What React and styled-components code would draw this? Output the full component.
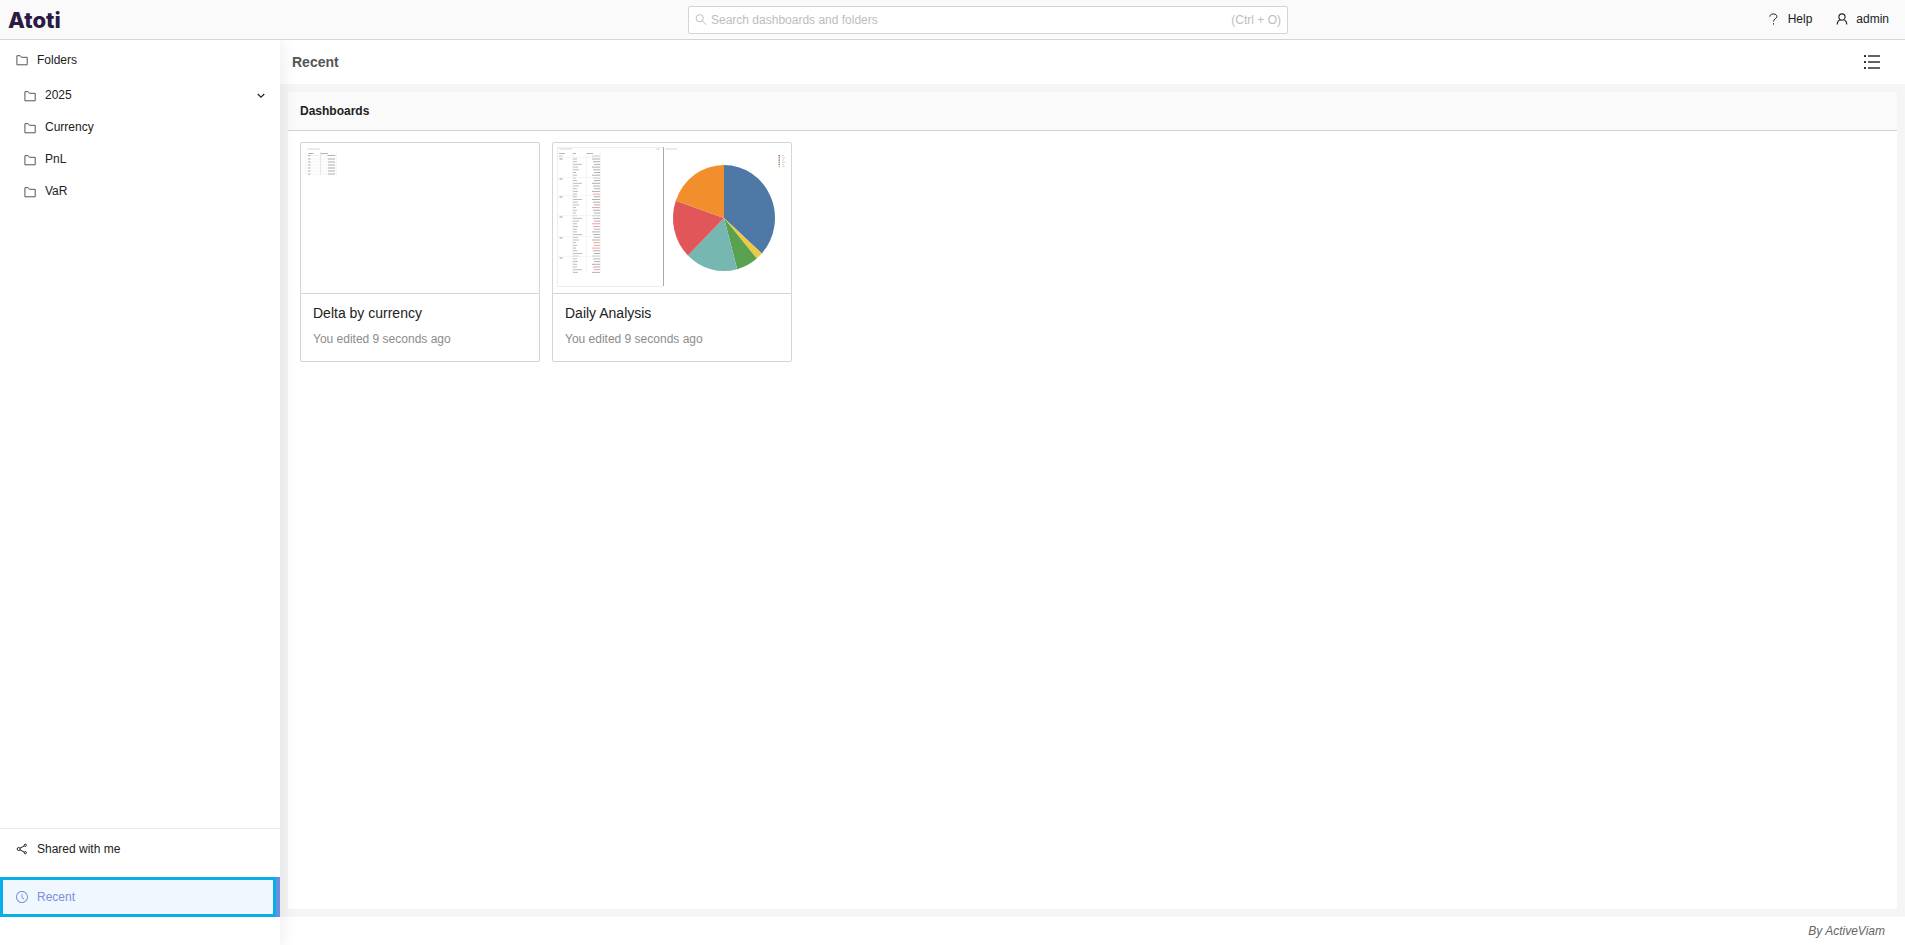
import React, { useState } from "react";
import styled, { createGlobalStyle } from "styled-components";
import { AiOutlineClockCircle } from "react-icons/ai";

const GlobalStyle = createGlobalStyle`
    * {
        box-sizing: border-box;
    }
    body {
        margin: 0;
        font-family: "Liberation Sans", Arial, sans-serif;
        font-size: 12px;
        line-height: 20px;
        color: #212121;
        background: #fff;
    }
    button, input {
        font: inherit;
        color: inherit;
    }
    svg {
        display: block;
        flex: none;
    }
`

const Page = styled.div`
    display: flex;
    flex-direction: column;
    height: 100vh;
`

const Header = styled.header`
    display: flex;
    align-items: center;
    flex: none;
    height: 40px;
    background: #fafafa;
    border-bottom: 1px solid #d5d5d5;
`

const LogoLink = styled.a`
    flex: 1 1 87px;
    padding-left: 8px;
    font-family: Inter, "Open Sans", sans-serif;
    font-size: 22px;
    font-weight: 800;
    line-height: 28px;
    color: #2b1a45;
    text-decoration: none;
`

const SearchBox = styled.label`
    display: flex;
    align-items: center;
    gap: 4px;
    width: 600px;
    height: 28px;
    padding: 0 6px;
    background: #fff;
    border: 1px solid #d5d5d5;
    border-radius: 2px;
    color: #bdbdbd;
`

const SearchInput = styled.input`
    flex: 1;
    min-width: 0;
    padding: 0;
    border: none;
    outline: none;
    background: transparent;
    color: #212121;

    &::placeholder {
        color: #bdbdbd;
        opacity: 1;
    }
`

const HeaderActions = styled.nav`
    display: flex;
    flex: 1 1 0;
    justify-content: flex-end;
    gap: 24px;
    padding: 0 16px 2px 0;
`

const PlainButton = styled.button`
    display: flex;
    align-items: center;
    gap: 8px;
    padding: 0;
    border: none;
    background: none;
    cursor: pointer;
`

const Body = styled.div`
    display: flex;
    flex: 1;
    min-height: 0;
`

const Sidebar = styled.aside`
    display: flex;
    flex-direction: column;
    flex: none;
    width: 280px;
    padding-bottom: 28px;
    background: #fff;
    box-shadow: 2px 0 16px rgba(0, 0, 0, 0.08);
    clip-path: inset(0 -24px 0 0);
    z-index: 1;
`

const MenuItem = styled(PlainButton)`
    width: 100%;
    height: 40px;
    padding: 0 16px;
    gap: 9px;
    color: ${(props) => (props.$active ? "#7a90db" : "#212121")};
    background: ${(props) => (props.$active ? "#f0f7ff" : "none")};
    border-right: ${(props) => (props.$active ? "4px solid #6b8fdf" : "none")};
    box-shadow: ${(props) => (props.$active ? "inset 0 0 0 3px #08aeea" : "none")};
`

const Tree = styled.ul`
    flex: 1;
    margin: 0;
    padding: 0;
    list-style: none;
`

const TreeItem = styled(PlainButton)`
    width: 100%;
    height: 32px;
    padding: 0 14px 0 24px;
    gap: 9px;

    span {
        flex: 1;
        padding-bottom: 2px;
        text-align: left;
    }
`

const SidebarFooter = styled.div`
    display: flex;
    flex-direction: column;
    gap: 8px;
    border-top: 1px solid #ebebeb;
`

const Main = styled.main`
    display: flex;
    flex-direction: column;
    flex: 1;
    min-width: 0;
`

const TitleBar = styled.div`
    display: flex;
    align-items: center;
    justify-content: space-between;
    height: 44px;
    padding: 0 24px 0 12px;
`

const Title = styled.h1`
    margin: 0;
    font-size: 14px;
    color: #555;
`

const Content = styled.div`
    display: flex;
    flex: 1;
    min-height: 0;
    padding: 8px;
    background: #f5f5f5;
`

const Panel = styled.section`
    flex: 1;
    background: #fff;
    border-radius: 2px;
    overflow: auto;
`

const PanelTitle = styled.h2`
    margin: 0;
    padding: 9px 12px;
    font-size: 12px;
    background: #fafafa;
    border-bottom: 1px solid #d5d5d5;
`

const Cards = styled.div`
    display: flex;
    flex-wrap: wrap;
    gap: 12px;
    padding: 11px 12px;
`

const Card = styled.a`
    width: 240px;
    height: 220px;
    color: inherit;
    text-decoration: none;
    border: 1px solid #d5d5d5;
    border-radius: 2px;
`

const Preview = styled.div`
    height: 151px;
    border-bottom: 1px solid #d5d5d5;

    svg {
        width: 100%;
        height: 100%;
    }
`

const CardText = styled.div`
    padding: 7px 12px;
`

const CardTitle = styled.h3`
    margin: 0 0 4px;
    font-size: 14px;
    font-weight: 400;
    line-height: 24px;
`

const CardInfo = styled.p`
    margin: 0;
    color: #8c8c8c;
`

const Footer = styled.footer`
    height: 28px;
    padding: 4px 20px;
    text-align: right;
    font-style: italic;
    color: #666;
`

const FolderIcon = () => (
    <svg width="12" height="12" viewBox="0 0 12 12" fill="none" stroke="#555">
        <path d="M.9 10.8V1.700H4.200L5.400 3.300H11.200V10.800Z" />
    </svg>
)

const SearchIcon = () => (
    <svg width="12" height="12" viewBox="0 0 12 12" fill="none" stroke="currentColor">
        <circle cx="4.7" cy="4.2" r="3.6" />
        <path d="M7.200 6.800L11.200 10.800" />
    </svg>
)

const HelpIcon = () => (
    <svg width="12" height="12" viewBox="0 0 12 12" fill="none" stroke="currentColor">
        <path d="M1.800 3.700C1.800 0 8.900 0 8.900 3.500C8.900 5.800 5.500 5.600 5.500 8.500M5.500 10.200V11.600" />
    </svg>
)

const UserIcon = () => (
    <svg width="12" height="12" viewBox="0 0 12 12" fill="none" stroke="currentColor" strokeWidth="1.1">
        <circle cx="6" cy="4" r="3.1" />
        <path d="M1.2 11.5C1.3 9 2.8 7.3 4.4 6.8M7.6 6.8C9.2 7.3 10.7 9 10.8 11.5" />
    </svg>
)

const ShareIcon = () => (
    <svg width="12" height="12" viewBox="0 0 12 12" fill="none" stroke="currentColor">
        <circle cx="2.700" cy="6" r="1.500" />
        <circle cx="9.300" cy="2.300" r="1.100" />
        <circle cx="9.300" cy="9.700" r="1.100" />
        <path d="M4 5.200L8.300 2.900M4 6.800L8.300 9.100" />
    </svg>
)

const ChevronIcon = () => (
    <svg width="10" height="10" viewBox="0 0 10 10" fill="none" stroke="currentColor" strokeWidth="1.200">
        <path d="M1.700 3L5 6.200L8.300 3" />
    </svg>
)

const ListIcon = () => (
    <svg width="18" height="16" viewBox="0 0 18 16" fill="currentColor">
        {[1, 7, 13].map((y) => (
            <g key={y}>
                <rect x="1" y={y} width="2" height="2" rx=".5" />
                <rect x="5" y={y + 0.3} width="12" height="1.400" />
            </g>
        ))}
    </svg>
)

const CurrencyPreview = () => (
    <svg viewBox="0 0 238 150">
        <path d="M6.500 6H19" stroke="#ccc" strokeWidth=".8" />
        <path d="M7 10.500H12.500M20 10.500H27" stroke="#aaa" strokeWidth=".9" />
        <path d="M19.500 9V32" stroke="#e6e6e6" />
        <path d="M4.500 9V32M35.500 9V32" stroke="#f4f4f4" />
        {[12.500, 16, 19, 22, 25, 28, 31].map((y) => (
            <g key={y}>
                <path d={`M5 ${y}H35`} stroke="#eee" strokeWidth=".6" />
                <path d={`M7 ${y}H9.500`} stroke="#aaa" strokeWidth=".9" />
                <path d={`M${26 + (y % 3)} ${y}H34`} stroke="#b0b0b0" />
            </g>
        ))}
    </svg>
)

const slices = [
    { color: "#4e79a7", from: 0, to: 132 },
    { color: "#edc948", from: 132, to: 140 },
    { color: "#59a14f", from: 140, to: 165 },
    { color: "#76b7b2", from: 165, to: 225 },
    { color: "#e15759", from: 225, to: 289 },
    { color: "#f28e2b", from: 289, to: 360 },
]

const legend = ["#4e79a7", "#f28e2b", "#e15759", "#76b7b2", "#59a14f", "#edc948"]

const point = (deg) => {
    const rad = (deg * Math.PI) / 180
    return `${171 + 51 * Math.sin(rad)} ${75 - 53 * Math.cos(rad)}`
}

// y positions of the rows that start a group and of the negative values
const groupRows = [16, 36, 54, 74, 95, 115]
const redRows = [51, 64, 80, 83, 100, 103, 106, 120, 126]
const labelWidths = [4, 4, 9, 5, 6, 3, 4, 3, 4, 9, 6, 4, 5]

const AnalysisPreview = () => {
    const rows = Array.from({ length: 43 }, (_, i) => i)
    return (
        <svg viewBox="0 0 238 150">
            <path d="M4.500 4V143M4 4.500H110M4 143.500H110" stroke="#eee" fill="none" />
            <path d="M6 6H19M103 6H107M112 6H124" stroke="#ccc" strokeWidth=".8" />
            <path d="M6 10.500H12M20 10.500H23M33 10.500H40" stroke="#aaa" strokeWidth=".9" />
            <path d="M6 13H10M39 13H47" stroke="#bbb" strokeWidth=".8" />
            <path d="M33.500 9V130M47.500 9V130M19.500 9V130" stroke="#f4f4f4" />
            {rows.map((i) => {
                const y = 16 + i * 2.7
                const red = redRows.some((r) => Math.abs(r - y) < 1.3)
                return (
                    <g key={i}>
                        <path d={`M20 ${y}H${20 + labelWidths[i % 13]}`} stroke="#b5b5b5" strokeWidth=".9" />
                        <path d={`M${39 + (i % 3)} ${y}H47`} stroke={red ? "#f2a0a0" : "#b0b0b0"} />
                    </g>
                )
            })}
            {groupRows.map((y) => (
                <g key={y}>
                    <path d={`M5 ${y - 1.5}H47`} stroke="#eee" strokeWidth=".6" />
                    <path d={`M6.500 ${y}H9.500`} stroke="#999" />
                </g>
            ))}
            <path d="M110.500 4V143" stroke="#aaa" />
            {slices.map((s) => (
                <path key={s.color} fill={s.color} d={`M171 75L${point(s.from)}A51 53 0 0 1 ${point(s.to)}Z`} />
            ))}
            {legend.map((color, i) => (
                <g key={color}>
                    <rect x="225.500" y={12 + i * 2.2} width="1.500" height="1.400" fill={color} />
                    <path d={`M229 ${12.6 + i * 2.2}H${231 + (i % 2)}`} stroke="#ccc" strokeWidth=".8" />
                </g>
            ))}
        </svg>
    )
}

const folders = ["2025", "Currency", "PnL", "VaR"]

const dashboards = [
    { name: "Delta by currency", preview: <CurrencyPreview /> },
    { name: "Daily Analysis", preview: <AnalysisPreview /> },
]

const App = () => {
    const [search, setSearch] = useState("")

    return (
        <Page>
            <GlobalStyle />
            <Header>
                <LogoLink href="#">Atoti</LogoLink>
                <SearchBox>
                    <SearchIcon />
                    <SearchInput
                        aria-label="Search dashboards and folders"
                        placeholder="Search dashboards and folders"
                        value={search}
                        onChange={(e) => setSearch(e.target.value)}
                    />
                    <span>(Ctrl + O)</span>
                </SearchBox>
                <HeaderActions>
                    <PlainButton><HelpIcon />Help</PlainButton>
                    <PlainButton><UserIcon />admin</PlainButton>
                </HeaderActions>
            </Header>
            <Body>
                <Sidebar>
                    <MenuItem><FolderIcon />Folders</MenuItem>
                    <Tree>
                        {folders.map((name, i) => (
                            <li key={name}>
                                <TreeItem>
                                    <FolderIcon />
                                    <span>{name}</span>
                                    {i === 0 && <ChevronIcon />}
                                </TreeItem>
                            </li>
                        ))}
                    </Tree>
                    <SidebarFooter>
                        <MenuItem><ShareIcon />Shared with me</MenuItem>
                        <MenuItem $active>
                            <AiOutlineClockCircle size={12} viewBox="64 64 896 896" />Recent
                        </MenuItem>
                    </SidebarFooter>
                </Sidebar>
                <Main>
                    <TitleBar>
                        <Title>Recent</Title>
                        <PlainButton aria-label="List view"><ListIcon /></PlainButton>
                    </TitleBar>
                    <Content>
                        <Panel>
                            <PanelTitle>Dashboards</PanelTitle>
                            <Cards>
                                {dashboards.map((d) => (
                                    <Card key={d.name} href="#">
                                        <Preview>{d.preview}</Preview>
                                        <CardText>
                                            <CardTitle>{d.name}</CardTitle>
                                            <CardInfo>You edited 9 seconds ago</CardInfo>
                                        </CardText>
                                    </Card>
                                ))}
                            </Cards>
                        </Panel>
                    </Content>
                    <Footer>By ActiveViam</Footer>
                </Main>
            </Body>
        </Page>
    )
}

export default App;
